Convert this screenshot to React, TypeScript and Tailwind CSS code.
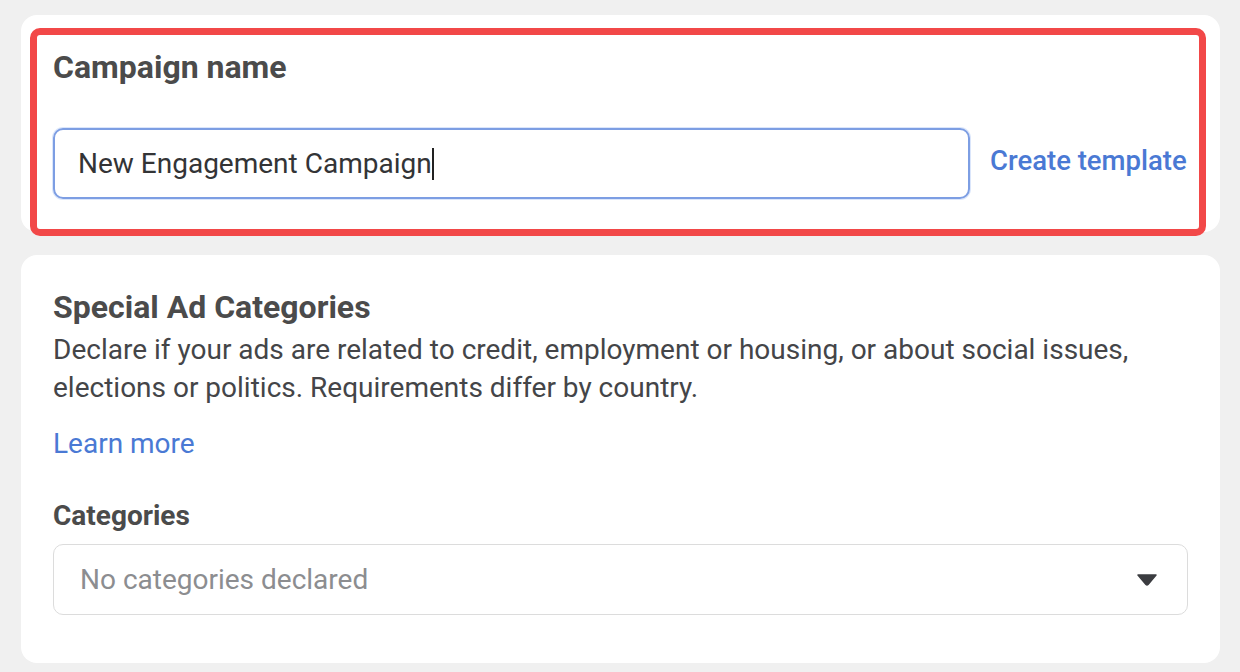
import React from "react";

export default function App() {
  return (
    <div
      className="relative w-[1240px] h-[672px] bg-[#f0f0f0] overflow-hidden"
      style={{ fontFamily: "Roboto, 'Liberation Sans', sans-serif" }}
    >
      <div className="flex flex-col gap-[23px] pl-[21px] pr-[20px] pt-[15px]">
        <div className="bg-white rounded-[16px] h-[217px] px-[32px] pt-[33px]">
          <div className="text-[32px] leading-[38px] font-bold text-[#4b4b4b]">Campaign name</div>
          <div className="flex items-center gap-[20px] mt-[42px]">
            <div className="w-[917px] shrink-0 h-[71px] rounded-[10px] border-2 border-[#7d9ee3] shadow-[0_0_0_1px_#dbe6fb] flex items-center pl-[23px]">
              <span className="text-[28px] text-[#333436]">New Engagement Campaign</span>
              <span className="w-[2px] h-[32px] bg-[#222]" />
            </div>
            <span className="text-[27.5px] font-medium text-[#4a79d4] whitespace-nowrap -mt-[6px]">Create template</span>
          </div>
        </div>
        <div className="bg-white rounded-[16px] h-[408px] px-[32px] pt-[33px]">
          <div className="text-[32px] leading-[38px] font-bold text-[#4b4b4b]">Special Ad Categories</div>
          <div className="text-[28px] leading-[38px] text-[#444548] mt-[5px]">
            Declare if your ads are related to credit, employment or housing, or about social issues,
            <br />
            elections or politics. Requirements differ by country.
          </div>
          <div className="text-[28px] leading-[38px] text-[#4a79d4] mt-[18px]">Learn more</div>
          <div className="text-[28px] leading-[34px] font-bold text-[#4b4b4b] mt-[36px]">Categories</div>
          <div className="mt-[11px] w-[1135px] h-[71px] rounded-[10px] border border-[#dcdcdc] flex items-center justify-between pl-[26px] pr-[30px]">
            <span className="text-[28px] text-[#8c8d90]">No categories declared</span>
            <svg width="20" height="12" viewBox="0 0 20 12">
              <path d="M1 1 H19 L11 10.5 Q10 11.5 9 10.5 Z" fill="#3b3c40" stroke="#3b3c40" strokeWidth="1.5" strokeLinejoin="round" />
            </svg>
          </div>
        </div>
      </div>
      <div className="absolute left-[30px] top-[28px] w-[1176px] h-[208px] border-[7px] border-[#f24848] rounded-[10px] pointer-events-none" />
    </div>
  );
}
